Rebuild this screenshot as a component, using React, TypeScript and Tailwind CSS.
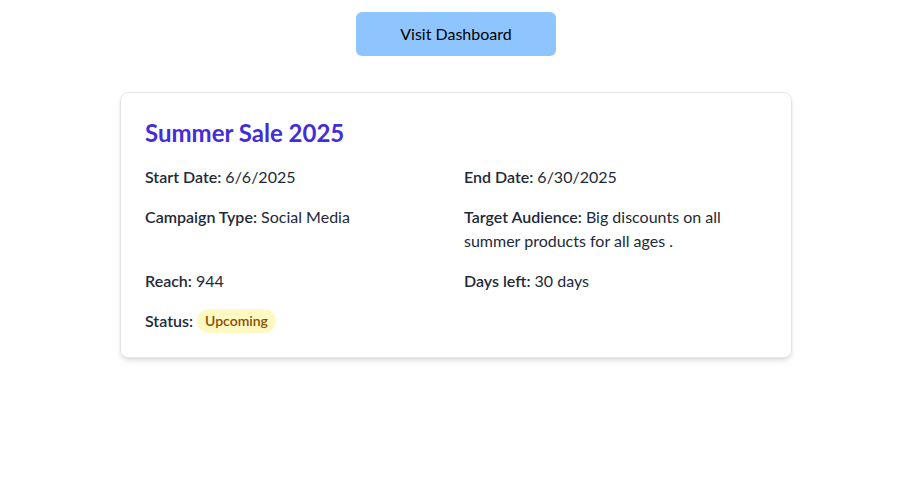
import React from "react";

export default function App() {
  return (
    <div className="min-h-screen bg-white text-gray-800" style={{ fontFamily: "Lato, 'Open Sans', sans-serif" }}>
      <div className="flex flex-col items-center pt-3 pl-[4px]">
        <button className="w-[200px] h-[44px] rounded-md bg-blue-300 text-black text-base">
          Visit Dashboard
        </button>
        <div className="mt-[36px] w-[672px] rounded-lg border border-gray-200 bg-white p-6 shadow-md">
          <h2 className="mb-4 text-2xl font-bold text-indigo-700">Summer Sale 2025</h2>
          <div className="grid grid-cols-2 gap-4 text-base leading-6">
            <p><span className="font-semibold">Start Date:</span> 6/6/2025</p>
            <p><span className="font-semibold">End Date:</span> 6/30/2025</p>
            <p><span className="font-semibold">Campaign Type:</span> Social Media</p>
            <p><span className="font-semibold">Target Audience:</span> Big discounts on all summer products for all ages .</p>
            <p><span className="font-semibold">Reach:</span> 944</p>
            <p><span className="font-semibold">Days left:</span> 30 days</p>
            <p className="flex items-center gap-1">
              <span className="font-semibold">Status:</span>
              <span className="rounded-full bg-yellow-100 px-2 py-[2px] text-sm font-semibold text-yellow-800">Upcoming</span>
            </p>
          </div>
        </div>
      </div>
    </div>
  );
}
